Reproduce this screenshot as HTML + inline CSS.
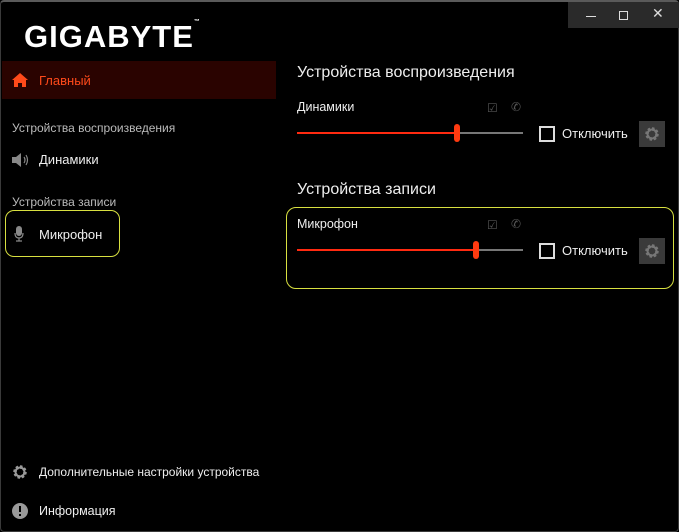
<!DOCTYPE html>
<html><head><meta charset="utf-8"><style>
*{margin:0;padding:0;box-sizing:border-box}
body{width:679px;height:532px;background:#000;font-family:"Liberation Sans","DejaVu Sans",sans-serif;color:#e6e6e6;position:relative;overflow:hidden}
.a{position:absolute;white-space:nowrap}
.win{position:absolute;left:0;top:0;width:679px;height:532px;border:1px solid #3a3a3a;border-top:2px solid #5a5a5a;border-radius:4px}
.tb{position:absolute;left:568px;top:2px;width:111px;height:26px;background:#2a2a2a}
.sl{position:absolute;height:2px;background:#777}
.sr{position:absolute;height:2px;background:#ff2a10}
.th{position:absolute;width:6px;height:18px;border-radius:3px;background:#ff3a10}
.cb{position:absolute;width:16px;height:16px;border:2px solid #ddd}
.gb{position:absolute;width:26px;height:26px;background:#3a3a3a}
</style></head><body>
<div class="win"></div>
<div class="tb"></div>
<div class="a" style="left:586px;top:16px;width:10px;height:1px;background:#ddd"></div>
<div class="a" style="left:619px;top:11px;width:9px;height:9px;border:1px solid #ddd"></div>
<div class="a" style="left:652px;top:5px;font-size:14px;color:#ddd">✕</div>

<div class="a" style="left:24px;top:19px;font-size:31px;font-weight:bold;color:#fff;letter-spacing:1px">GIGABYTE<span style="font-size:6px;vertical-align:top">™</span></div>

<div class="a" style="left:2px;top:61px;width:274px;height:38px;background:#2a0300"></div>
<svg class="a" style="left:12px;top:73px" width="16" height="14" viewBox="0 0 16 14"><path d="M8 0L0 7h2v7h4v-4h4v4h4V7h2z" fill="#ff4a1a"/></svg>
<div class="a" style="left:39px;top:73px;font-size:13px;color:#ff4a1a">Главный</div>

<div class="a" style="left:12px;top:121px;font-size:12px;color:#bbb">Устройства воспроизведения</div>
<svg class="a" style="left:12px;top:153px" width="18" height="14" viewBox="0 0 18 14"><path d="M0 4h4l5-4v14l-5-4H0z" fill="#888"/><path d="M12 4q2 3 0 6M14 2q3 5 0 10" stroke="#888" fill="none" stroke-width="1.2"/></svg>
<div class="a" style="left:39px;top:152px;font-size:13px;color:#eee">Динамики</div>

<div class="a" style="left:12px;top:195px;font-size:12px;color:#bbb">Устройства записи</div>
<div class="a" style="left:5px;top:210px;width:115px;height:47px;border:1px solid #d8e040;border-radius:9px"></div>
<svg class="a" style="left:14px;top:226px" width="10" height="16" viewBox="0 0 10 16"><rect x="2" y="0" width="6" height="10" rx="3" fill="#888"/><path d="M1 7q0 5 4 5t4-5M5 12v3M2 15h6" stroke="#888" fill="none" stroke-width="1.2"/></svg>
<div class="a" style="left:39px;top:227px;font-size:13px;color:#eee">Микрофон</div>

<svg class="a" style="left:12px;top:464px" width="16" height="16" viewBox="0 0 16 16"><circle cx="8" cy="8" r="5" fill="none" stroke="#999" stroke-width="3.5" stroke-dasharray="2.2 1.7"/><circle cx="8" cy="8" r="4.5" fill="none" stroke="#999" stroke-width="2"/></svg>
<div class="a" style="left:39px;top:465px;font-size:12px;color:#eee">Дополнительные настройки устройства</div>
<svg class="a" style="left:12px;top:503px" width="16" height="16" viewBox="0 0 16 16"><circle cx="8" cy="8" r="8" fill="#999"/><rect x="7" y="3" width="2" height="6" fill="#000"/><rect x="7" y="11" width="2" height="2" fill="#000"/></svg>
<div class="a" style="left:39px;top:504px;font-size:12.5px;color:#eee">Информация</div>

<div class="a" style="left:297px;top:64px;font-size:16px;color:#eee">Устройства воспроизведения</div>
<div class="a" style="left:297px;top:100px;font-size:12.5px;color:#eee">Динамики</div>
<div class="a" style="left:487px;top:101px;font-size:12px;color:#555">☑</div>
<div class="a" style="left:511px;top:100px;font-size:12px;color:#555">✆</div>
<div class="sr" style="left:297px;top:132px;width:160px"></div>
<div class="sl" style="left:457px;top:132px;width:66px"></div>
<div class="th" style="left:454px;top:124px"></div>
<div class="cb" style="left:539px;top:126px"></div>
<div class="a" style="left:562px;top:126px;font-size:13px;color:#eee">Отключить</div>
<div class="gb" style="left:639px;top:121px"></div>
<svg class="a" style="left:644px;top:126px" width="16" height="16" viewBox="0 0 16 16"><circle cx="8" cy="8" r="5" fill="none" stroke="#777" stroke-width="3.5" stroke-dasharray="2.2 1.7"/><circle cx="8" cy="8" r="4.5" fill="none" stroke="#777" stroke-width="2"/></svg>

<div class="a" style="left:297px;top:181px;font-size:16px;color:#eee">Устройства записи</div>
<div class="a" style="left:286px;top:207px;width:388px;height:82px;border:1px solid #d8e040;border-radius:10px"></div>
<div class="a" style="left:297px;top:217px;font-size:12.5px;color:#eee">Микрофон</div>
<div class="a" style="left:487px;top:218px;font-size:12px;color:#555">☑</div>
<div class="a" style="left:511px;top:217px;font-size:12px;color:#555">✆</div>
<div class="sr" style="left:297px;top:249px;width:179px"></div>
<div class="sl" style="left:476px;top:249px;width:47px"></div>
<div class="th" style="left:473px;top:241px"></div>
<div class="cb" style="left:539px;top:243px"></div>
<div class="a" style="left:562px;top:243px;font-size:13px;color:#eee">Отключить</div>
<div class="gb" style="left:639px;top:238px"></div>
<svg class="a" style="left:644px;top:243px" width="16" height="16" viewBox="0 0 16 16"><circle cx="8" cy="8" r="5" fill="none" stroke="#777" stroke-width="3.5" stroke-dasharray="2.2 1.7"/><circle cx="8" cy="8" r="4.5" fill="none" stroke="#777" stroke-width="2"/></svg>
</body></html>
